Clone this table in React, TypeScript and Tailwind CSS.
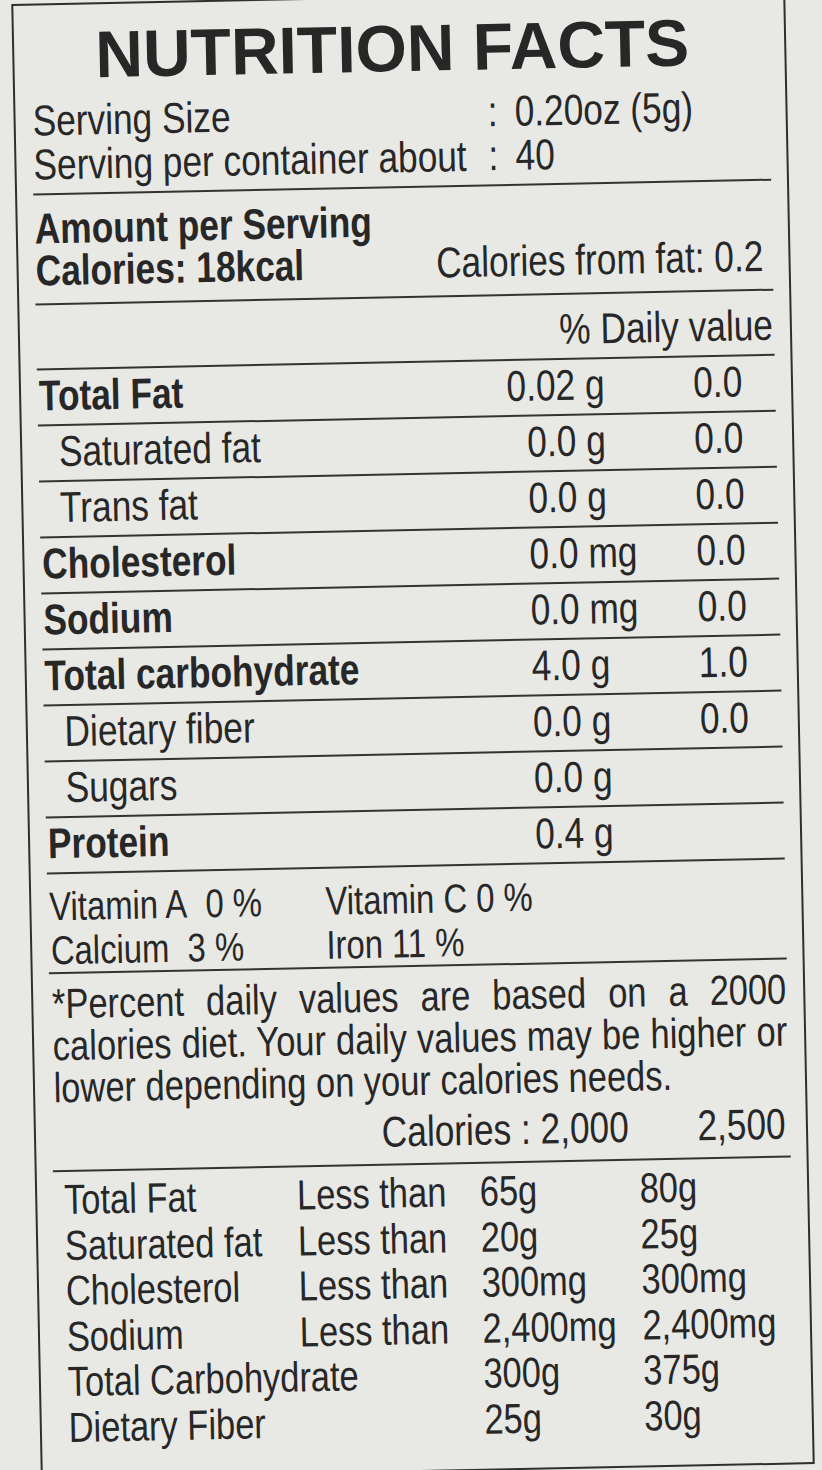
const nutrients = [
  { label: "Total Fat", bold: true, num: "0.02", unit: "g", dv: "0.0" },
  { label: "Saturated fat", bold: false, num: "0.0", unit: "g", dv: "0.0" },
  { label: "Trans fat", bold: false, num: "0.0", unit: "g", dv: "0.0" },
  { label: "Cholesterol", bold: true, num: "0.0", unit: "mg", dv: "0.0" },
  { label: "Sodium", bold: true, num: "0.0", unit: "mg", dv: "0.0" },
  { label: "Total carbohydrate", bold: true, num: "4.0", unit: "g", dv: "1.0" },
  { label: "Dietary fiber", bold: false, num: "0.0", unit: "g", dv: "0.0" },
  { label: "Sugars", bold: false, num: "0.0", unit: "g", dv: "" },
  { label: "Protein", bold: true, num: "0.4", unit: "g", dv: "" },
];

const limits = [
  ["Total Fat", "Less than", "65g", "80g"],
  ["Saturated fat", "Less than", "20g", "25g"],
  ["Cholesterol", "Less than", "300mg", "300mg"],
  ["Sodium", "Less than", "2,400mg", "2,400mg"],
  ["Total Carbohydrate", "", "300g", "375g"],
  ["Dietary Fiber", "", "25g", "30g"],
];

function Rule() {
  return <div className="-mx-px h-[2px] bg-[#333331]" />;
}

export default function App() {
  return (
    <div className="h-[1470px] overflow-hidden bg-[#e8e8e5] text-[#272727] font-['Liberation_Sans',Arial,sans-serif]">
      <div className="-mt-[4px] ml-[26px] h-[1476px] w-[774px] -rotate-[1.15deg] border-2 border-[#2f2f2d] px-[17px]">
        {/* Title */}
        <h1 className="pt-[17px] pr-[14px] text-center text-[66px] leading-[66px] font-bold">NUTRITION FACTS</h1>

        {/* The label is set in a narrow face: squeeze the block horizontally */}
        <div className="w-[897.6px] origin-left scale-x-[0.82]">
          {/* Serving */}
          <div className="mt-[10px] text-[43px] leading-[44px]">
            <div className="flex whitespace-nowrap">
              <span className="w-[555px]">Serving Size</span>
              <span className="w-[33px]">:</span>
              <span>0.20oz (5g)</span>
            </div>
            <div className="flex whitespace-nowrap">
              <span className="w-[555px]">Serving per container about</span>
              <span className="w-[33px]">:</span>
              <span>40</span>
            </div>
          </div>
          <div className="mt-[7px]">
            <Rule />
          </div>

          {/* Calories */}
          <div className="mt-[12px] text-[43px] leading-[42px]">
            <div className="font-bold">Amount per Serving</div>
            <div className="flex justify-between whitespace-nowrap pr-[10px]">
              <span className="font-bold">Calories: 18kcal</span>
              <span>Calories from fat: 0.2</span>
            </div>
          </div>
          <div className="mt-[12px]">
            <Rule />
          </div>

          <div className="mt-[12px] text-right text-[43px] leading-[44px]">% Daily value</div>
          <div className="mt-[7px]">
            <Rule />
          </div>

          {/* Nutrients */}
          <div className="text-[43px] leading-[48px]">
            {nutrients.map((n) => (
              <div
                key={n.label}
                className="-mx-px flex h-[56px] whitespace-nowrap border-b-2 border-[#333331] px-px pt-px"
              >
                <span className={n.bold ? "w-[571px] pl-px font-bold" : "w-[571px] pl-[24px]"}>{n.label}</span>
                <span className="w-[84px] text-right">{n.num}</span>
                <span className="w-[144px] pl-[12px]">{n.unit}</span>
                <span>{n.dv}</span>
              </div>
            ))}
          </div>

          {/* Vitamins */}
          <div className="mt-[10px] text-[40px] leading-[44px]">
            <div className="flex whitespace-nowrap">
              <span className="w-[338px] pl-px">Vitamin A&nbsp; 0 %</span>
              <span>Vitamin C 0 %</span>
            </div>
            <div className="flex whitespace-nowrap">
              <span className="w-[338px] pl-[2px]">Calcium&nbsp; 3 %</span>
              <span>Iron 11 %</span>
            </div>
          </div>
          <Rule />

          {/* Footnote */}
          <div className="mt-[9px] pl-[2px] text-[42px] leading-[42px]">
            <div className="whitespace-nowrap text-justify [text-align-last:justify]">
              *Percent daily values are based on a 2000
            </div>
            <div className="whitespace-nowrap text-justify [text-align-last:justify]">
              calories diet. Your daily values may be higher or
            </div>
            <div className="whitespace-nowrap">lower depending on your calories needs.</div>
          </div>

          <div className="mt-[7px] flex whitespace-nowrap pl-[401px] pr-[4px] text-[43px] leading-[44px]">
            <span>Calories : 2,000</span>
            <span className="ml-auto">2,500</span>
          </div>
          <div className="mt-[10px]">
            <Rule />
          </div>

          {/* Daily value limits */}
          <div className="mt-[5px] pl-[12px] text-[42px] leading-[45.6px]">
            {limits.map((r) => (
              <div key={r[0]} className="grid grid-cols-[284px_223px_195px_1fr] whitespace-nowrap">
                <span>{r[0]}</span>
                <span>{r[1]}</span>
                <span>{r[2]}</span>
                <span>{r[3]}</span>
              </div>
            ))}
          </div>
        </div>
      </div>
    </div>
  );
}
